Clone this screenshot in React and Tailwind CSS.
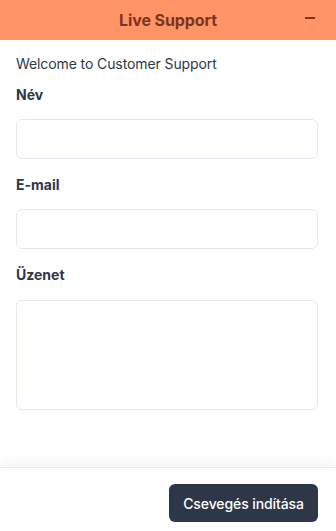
import React from "react";

export default function App() {
  return (
    <div
      className="flex h-[531px] w-[336px] flex-col bg-white text-[#2d3748]"
      style={{ fontFamily: "Inter, 'Noto Sans', sans-serif" }}
    >
      <div className="relative flex h-10 shrink-0 items-center justify-center bg-[#ff9467]">
        <span className="text-[16px] font-bold tracking-[-0.1px] text-[#7b341e]">Live Support</span>
        <span className="absolute right-[21px] top-[17px] h-[2px] w-[10px] bg-[#7b341e]"></span>
      </div>
      <div className="flex flex-1 flex-col pl-4 pr-[18px] pt-[14px]">
        <p className="text-[14px] leading-5 tracking-[-0.1px]">Welcome to Customer Support</p>
        <label className="mt-[11px] text-[14px] font-bold leading-5">Név</label>
        <input className="mt-[14px] h-10 w-full rounded-md border border-[#e2e8f0] px-3 outline-none" />
        <label className="mt-[16px] text-[14px] font-bold leading-5">E-mail</label>
        <input className="mt-[14px] h-10 w-full rounded-md border border-[#e2e8f0] px-3 outline-none" />
        <label className="mt-[16px] text-[14px] font-bold leading-5">Üzenet</label>
        <textarea className="mt-[15px] h-[110px] w-full resize-none rounded-md border border-[#e2e8f0] px-3 outline-none"></textarea>
      </div>
      <div className="flex h-16 shrink-0 justify-end border-t border-[#e8e8e8] pr-[18px] pt-4 shadow-[0_-6px_12px_rgba(0,0,0,0.04)]">
        <button className="h-[38px] w-[149px] rounded-md bg-[#2d3748] text-[14px] font-medium tracking-[-0.1px] text-white">
          Csevegés indítása
        </button>
      </div>
    </div>
  );
}
